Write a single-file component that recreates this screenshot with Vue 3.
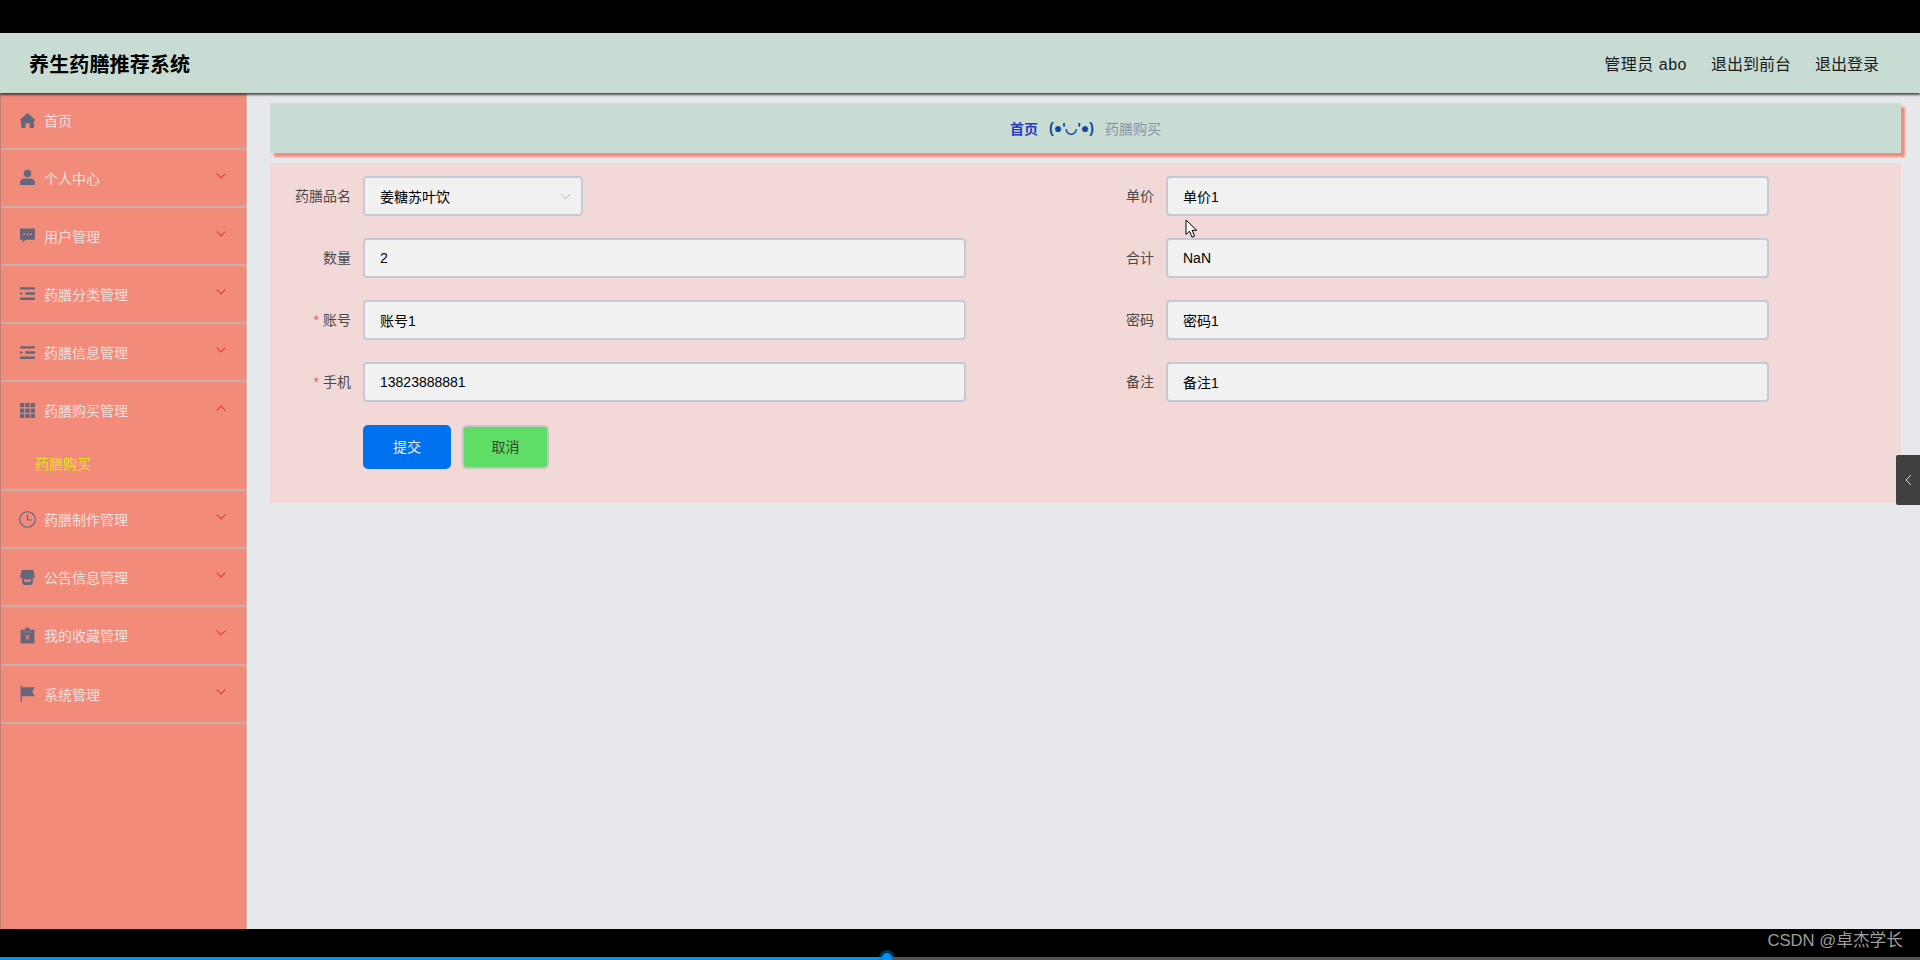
<script setup>
const menu = [
  { label: '首页', icon: 'home', plain: true },
  { label: '个人中心', icon: 'user' },
  { label: '用户管理', icon: 'chat' },
  { label: '药膳分类管理', icon: 'list' },
  { label: '药膳信息管理', icon: 'list' },
  { label: '药膳购买管理', icon: 'grid', open: true, children: ['药膳购买'] },
  { label: '药膳制作管理', icon: 'clock' },
  { label: '公告信息管理', icon: 'store' },
  { label: '我的收藏管理', icon: 'clip' },
  { label: '系统管理', icon: 'flag' },
]
const fields = [
  { label: '药膳品名', value: '姜糖苏叶饮', select: true },
  { label: '单价', value: '单价1' },
  { label: '数量', value: '2' },
  { label: '合计', value: 'NaN' },
  { label: '账号', value: '账号1', required: true },
  { label: '密码', value: '密码1' },
  { label: '手机', value: '13823888881', required: true },
  { label: '备注', value: '备注1' },
]
</script>

<template>
  <div class="screen">
    <div class="letter-top"></div>
    <header class="header">
      <div class="title">养生药膳推荐系统</div>
      <nav class="top-nav">
        <span class="admin">管理员 abo</span>
        <span>退出到前台</span>
        <span>退出登录</span>
      </nav>
    </header>
    <div class="body">
      <aside class="sidebar">
        <div v-for="item in menu" :key="item.label" class="menu-group">
          <div class="menu-row">
            <svg class="icon" viewBox="0 0 16 16">
              <path v-if="item.icon === 'home'" d="M8 1 .8 7.400 1.600 8.600 2 8.300V15h4v-4.500h4V15h4V8.300l.4.3.8-1.200z" />
              <template v-else-if="item.icon === 'user'">
                <circle cx="8" cy="4.200" r="3.500" />
                <path d="M1 15v-2.200C1 10.200 3.200 9 5.200 9h5.600c2 0 4.200 1.200 4.200 3.800V15z" />
              </template>
              <path v-else-if="item.icon === 'chat'" fill-rule="evenodd" d="M1 1.500h14V12H6l-2.600 2.800V12H1zM4 6v1.600h1.600V6zm3.200 0v1.600h1.600V6zm3.200 0v1.600H12V6z" />
              <path v-else-if="item.icon === 'list'" d="M1 2h14v2.200H1zM6 6.900h9v2.200H6zM1 6.600l3 1.400-3 1.400zM1 11.800h14V14H1z" />
              <path v-else-if="item.icon === 'grid'" d="M1 1h4v4H1zM6 1h4v4H6zM11 1h4v4h-4zM1 6h4v4H1zM6 6h4v4H6zM11 6h4v4h-4zM1 11h4v4H1zM6 11h4v4H6zM11 11h4v4h-4z" />
              <template v-else-if="item.icon === 'clock'">
                <circle class="line" cx="8" cy="8" r="7.300" />
                <path class="line" d="M8 3.500V8.500H12" />
              </template>
              <path v-else-if="item.icon === 'store'" d="M2.500 1h11l1.500 6.500q-1 1.500-2 1v4q0 2.500-2 2.500H5q-2 0-2-2.500v-4q-1 .5-2-1zM5 9.500V12h6V9.500q-3 1-6 0z" fill-rule="evenodd" />
              <path v-else-if="item.icon === 'clip'" fill-rule="evenodd" d="M6 .800h4V2.500h4.500V15.500H1.500V2.500H6zM4 4.500V5h8v-.5zM6 7.500 7.300 9.700 6 11.800h1L8 10.300 9 11.800h1L8.700 9.700 10 7.500H9L8 9 7 7.500z" />
              <path v-else-if="item.icon === 'flag'" d="M1.500 .500h1.200V2H15l-2.600 4.200L15 10.500H2.700V16H1.500z" />
            </svg>
            <span class="menu-label">{{ item.label }}</span>
            <svg v-if="!item.plain" class="chev" viewBox="0 0 10 6">
              <path :d="item.open ? 'M.7 5.300 5 1l4.300 4.300' : 'M.7.700 5 5 9.300.700'" />
            </svg>
          </div>
          <div v-for="child in item.children" :key="child" class="submenu">{{ child }}</div>
        </div>
      </aside>
      <main class="main">
        <div class="crumb">
          <span class="crumb-home">首页</span>
          <span class="crumb-sep">(●'◡'●)</span>
          <span class="crumb-cur">药膳购买</span>
        </div>
        <section class="panel">
          <div class="form-grid">
            <div v-for="f in fields" :key="f.label" class="field">
              <label class="field-label"><i v-if="f.required">*</i>{{ f.label }}</label>
              <div class="control" :class="{ select: f.select }">
                <span>{{ f.value }}</span>
                <svg v-if="f.select" class="select-arrow" viewBox="0 0 12 7"><path d="M1 1l5 5 5-5" /></svg>
              </div>
            </div>
          </div>
          <div class="actions">
            <button class="btn submit">提交</button>
            <button class="btn cancel">取消</button>
          </div>
        </section>
        <div class="side-tab">
          <svg viewBox="0 0 7 12"><path d="M6 1 1 6l5 5" /></svg>
        </div>
      </main>
    </div>
    <footer class="letter-bottom">
      <span class="watermark">CSDN @卓杰学长</span>
      <div class="progress">
        <div class="progress-fill"><span class="progress-dot"></span></div>
      </div>
    </footer>
    <svg class="cursor" viewBox="0 0 13 20">
      <path d="M1 1v14.500l3.500-3.300 2.500 6 2.600-1.100-2.500-5.800h4.700z" />
    </svg>
  </div>
</template>

<style>
html, body { margin: 0; background: #000; }
</style>

<style scoped>
.screen {
  position: relative;
  width: 1920px;
  height: 960px;
  display: flex;
  flex-direction: column;
  overflow: hidden;
  background: #000;
  font-family: "Liberation Sans", "Noto Sans CJK SC", sans-serif;
  font-size: 14px;
}
.letter-top { height: 33px; flex: none; }
.header {
  position: relative;
  z-index: 2;
  flex: none;
  height: 60px;
  box-sizing: border-box;
  padding: 0 41px 0 29px;
  display: flex;
  align-items: center;
  justify-content: space-between;
  background: #c9dcd3;
  box-shadow: 0 2px 2px rgba(40, 40, 40, 0.8);
}
.title { font-size: 20px; font-weight: 700; color: #000; letter-spacing: 0.15px; }
.top-nav { display: flex; gap: 24px; font-size: 16px; color: #1c1c1c; padding-bottom: 1px; }
.admin { letter-spacing: 0.5px; }
.body { flex: 1; display: flex; min-height: 0; }
.sidebar {
  width: 247px;
  flex: none;
  box-sizing: border-box;
  background: #f38b7b;
  border-left: 1px solid #c97e72;
  border-right: 1px solid #d4b0ac;
}
.menu-group { border-bottom: 2px solid #c9aeac; }
.menu-group:first-child .menu-row { height: 54.5px; }
.menu-row {
  height: 56.2px;
  box-sizing: border-box;
  display: flex;
  align-items: center;
  padding: 0 20px 0 18px;
  position: relative;
}
.icon { width: 17px; height: 17px; fill: #66667a; flex: none; margin-right: 8px; }
.icon .line { fill: none; stroke: #66667a; stroke-width: 1.100; }
.menu-label { color: #efe0dd; font-size: 14px; }
.chev {
  width: 10px;
  height: 6px;
  margin-left: auto;
  margin-top: -4px;
  fill: none;
  stroke: #e0403c;
  stroke-width: 1.200;
}
.submenu {
  height: 50.5px;
  padding-left: 34px;
  padding-top: 4px;
  box-sizing: border-box;
  color: #ebe020;
  font-size: 14px;
  line-height: 44px;
}
.main {
  position: relative;
  flex: 1;
  background: #e7e8ec;
  padding: 10px 19px 0 23px;
  min-width: 0;
}
.crumb {
  height: 50px;
  box-sizing: border-box;
  padding-bottom: 1px;
  display: flex;
  align-items: center;
  justify-content: center;
  gap: 11px;
  background: #c9dcd3;
  box-shadow: 4px 4px 2px #f38b7b;
  font-size: 14px;
}
.crumb-home { color: #2a3bbd; font-weight: 700; }
.crumb-sep { color: #0d4a9e; font-weight: 700; }
.crumb-cur { color: #8a94a4; }
.panel {
  margin-top: 10px;
  height: 340px;
  box-sizing: border-box;
  padding: 13px 0 0 13px;
  background: #f2d8d7;
}
.form-grid {
  display: grid;
  grid-template-columns: 803px 1fr;
  row-gap: 22px;
}
.field { display: flex; align-items: center; height: 40px; }
.field-label {
  width: 80px;
  flex: none;
  box-sizing: border-box;
  padding: 0 12px 2px 0;
  text-align: right;
  color: #4a4a4a;
  font-size: 14px;
  white-space: nowrap;
}
.field-label i {
  font-style: normal;
  color: #e8616a;
  margin-right: 4px;
}
.control {
  width: 603px;
  height: 40px;
  box-sizing: border-box;
  padding: 0 15px;
  display: flex;
  align-items: center;
  justify-content: space-between;
  background: #f1f1f1;
  border: 2px solid #c6c8d6;
  border-radius: 4px;
  color: #000;
  font-size: 14px;
}
.control.select { width: 220px; }
.select-arrow { width: 11px; height: 7px; fill: none; stroke: #a8aab0; stroke-width: 1; margin-right: -5px; }
.actions { display: flex; gap: 11px; margin: 23px 0 0 80px; }
.btn {
  height: 44px;
  box-sizing: border-box;
  border-radius: 5px;
  font-family: inherit;
  font-size: 14px;
  padding: 0 0 2px;
}
.submit { width: 88px; background: #0072f0; border: none; color: #e8f0fa; }
.cancel { width: 87px; background: #5fdd66; border: 2px solid #c4c4c4; color: #2f4a30; }
.side-tab {
  position: absolute;
  right: 0;
  top: 362px;
  width: 24px;
  height: 50px;
  display: flex;
  align-items: center;
  justify-content: center;
  background: #3f403f;
  border-radius: 2px 0 0 2px;
}
.side-tab svg { width: 7px; height: 12px; fill: none; stroke: #d8d8d8; stroke-width: 1; }
.letter-bottom { position: relative; flex: none; height: 31px; background: #000; }
.watermark {
  position: absolute;
  right: 17px;
  top: 2px;
  color: #9c9c9c;
  font-size: 16.700px;
  line-height: 20px;
}
.progress { position: absolute; left: 0; right: 0; bottom: 0; height: 3px; background: #555; }
.progress-fill { position: relative; width: 887px; height: 100%; background: #0094f5; }
.progress-dot {
  position: absolute;
  right: -5px;
  top: -4px;
  width: 10px;
  height: 10px;
  border-radius: 50%;
  background: #0094f5;
  box-shadow: 0 0 0 3px rgba(0, 120, 210, 0.4);
}
.cursor {
  position: absolute;
  left: 1185px;
  top: 219px;
  width: 13px;
  height: 20px;
  fill: #fff;
  stroke: #000;
  stroke-width: 1;
}
</style>
